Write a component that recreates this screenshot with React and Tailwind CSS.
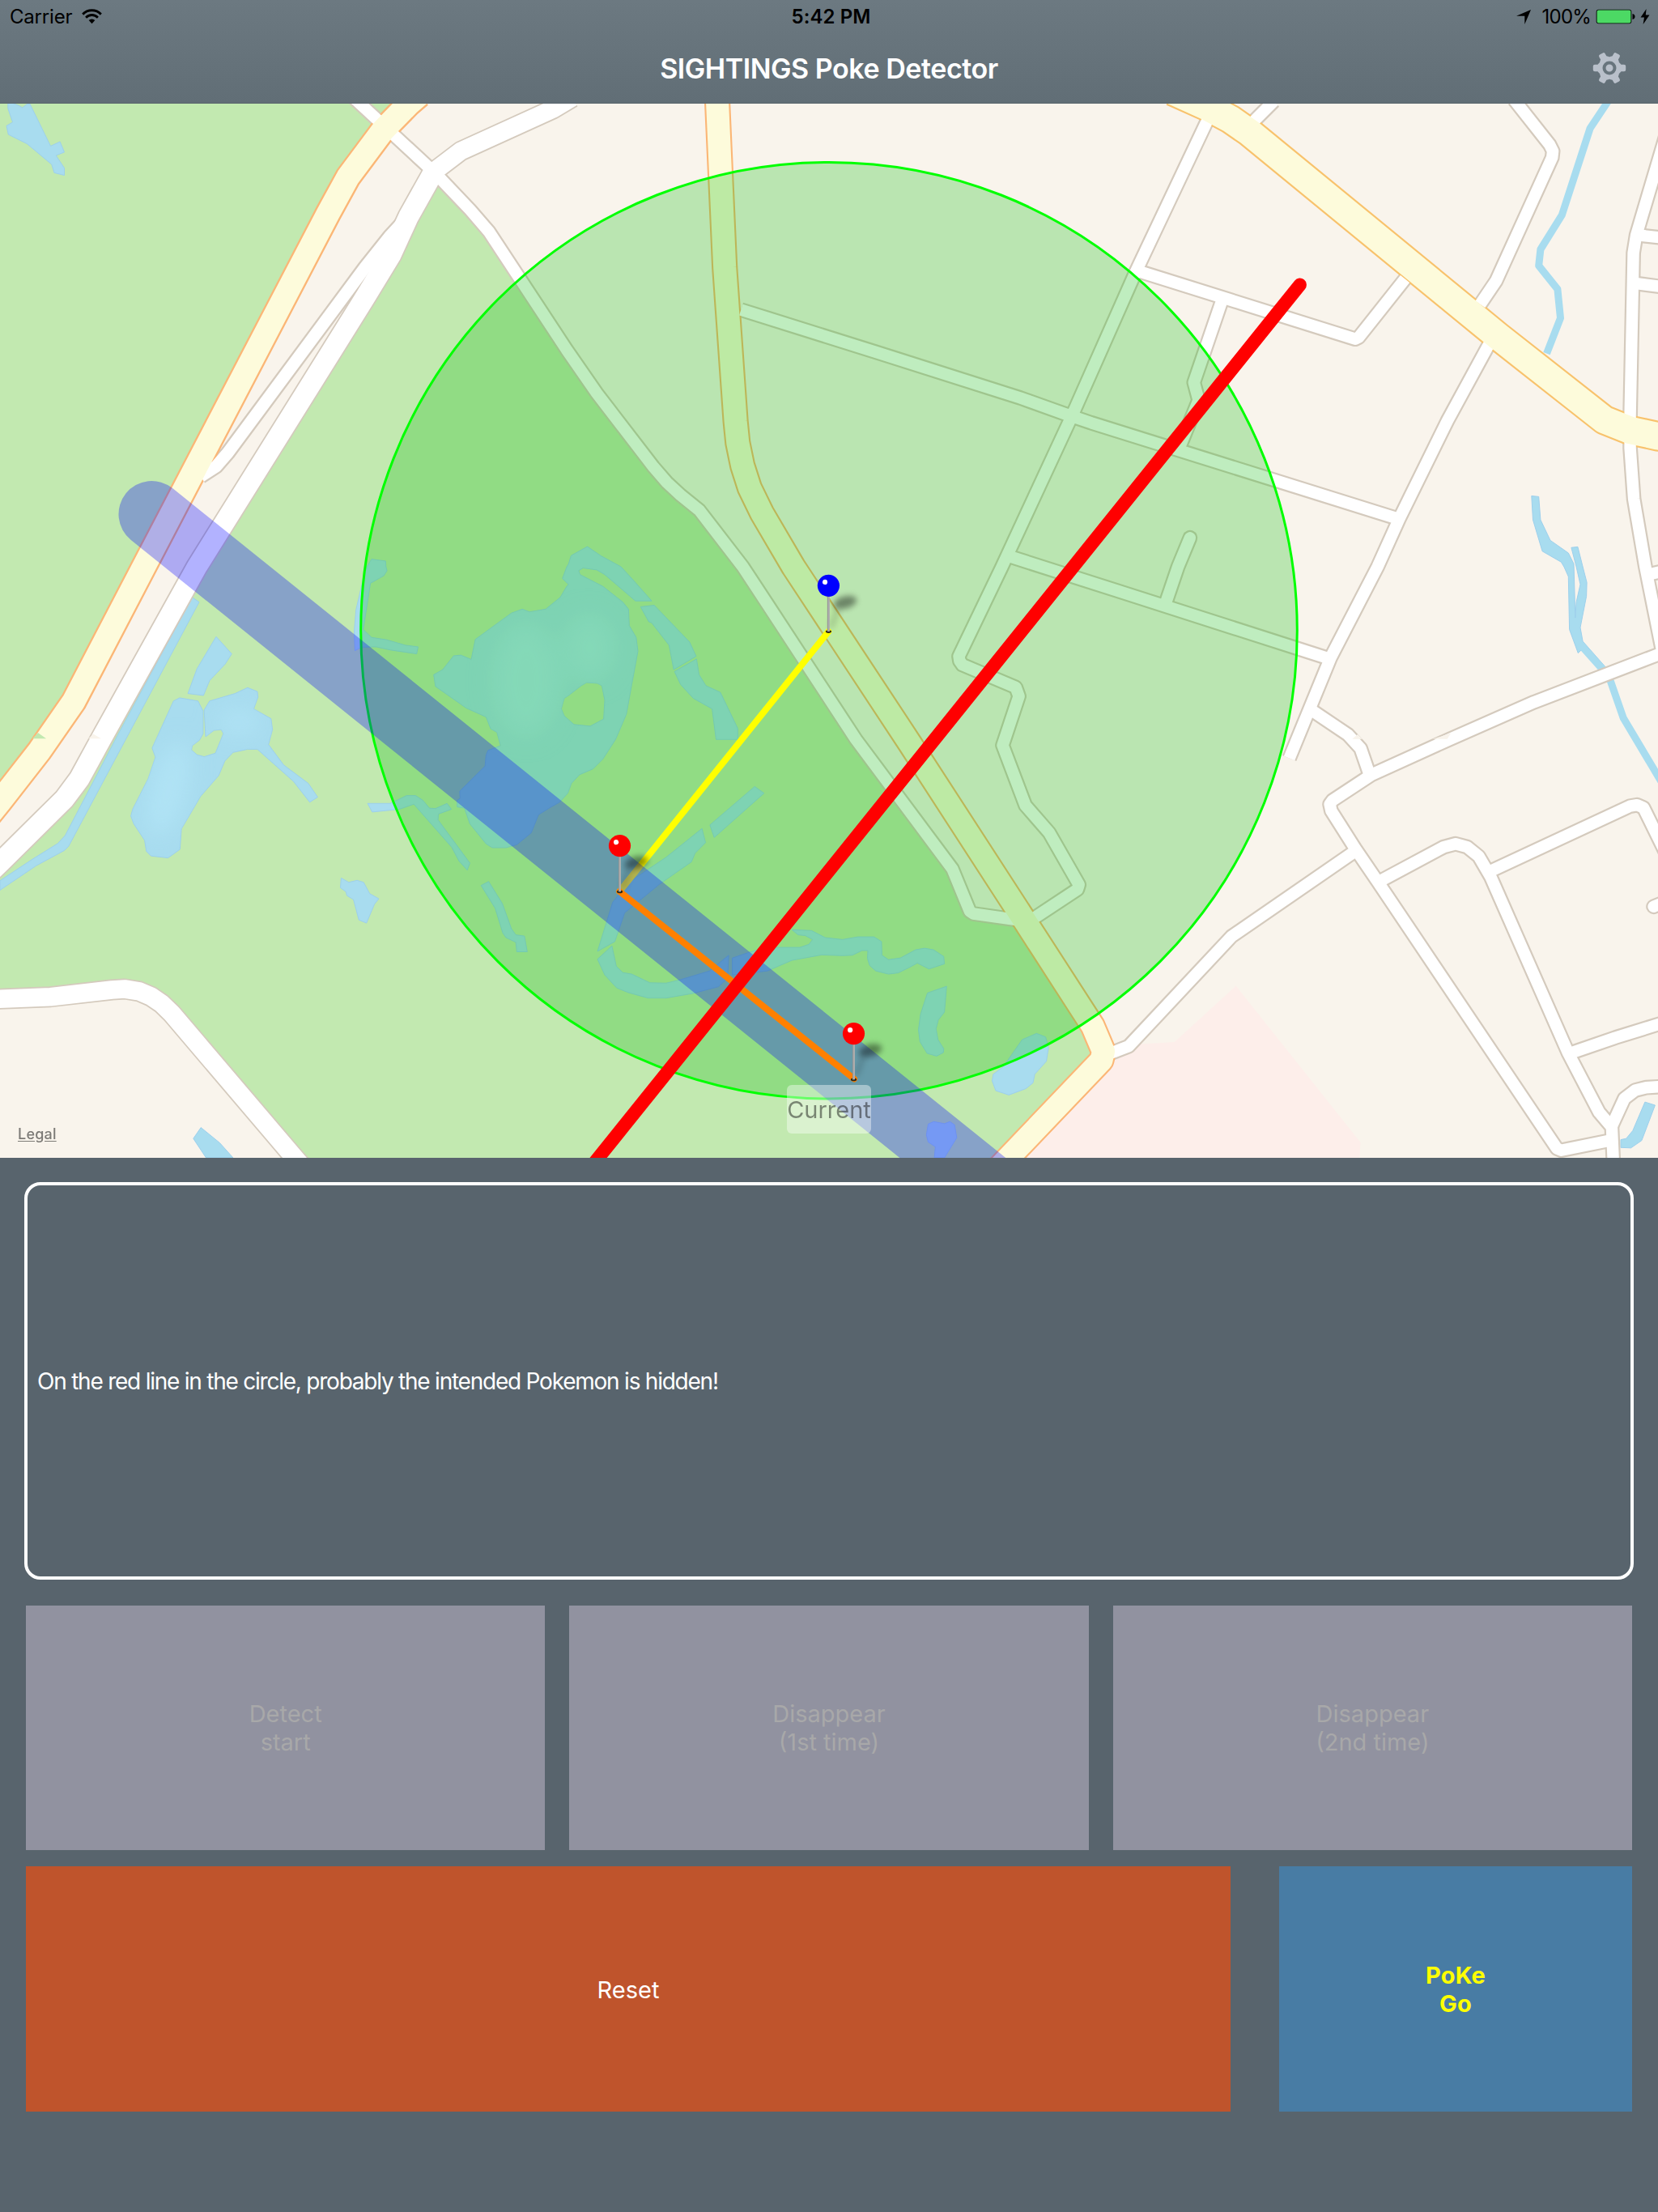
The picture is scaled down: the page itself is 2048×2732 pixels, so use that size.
import React from "react";

// Map geometry is stored per survey sheet: a letter selects the sheet that the
// coordinates after it belong to.
const SHEETS = {
  A: [0, 0, 2.24, 2.24],
  B: [680, 0, 2.24, 2.24],
  C: [1348, 0, 2.24, 2.24],
  D: [0, 700, 2.24, 2.0632],
  E: [680, 700, 2.24, 2.0632],
  F: [1348, 700, 2.24, 2.0632],
};

function trace(src, close) {
  let sheet = SHEETS.A;
  const pts = [];
  for (const token of src.trim().split(/\s+/)) {
    if (SHEETS[token]) {
      sheet = SHEETS[token];
      continue;
    }
    const [x, y] = token.split(",").map(Number);
    pts.push(`${(sheet[0] + x / sheet[2]).toFixed(1)} ${(sheet[1] + y / sheet[3]).toFixed(1)}`);
  }
  return "M" + pts.join("L") + (close ? "Z" : "");
}

const PARKS = [
  "A -20,200 1200,200 1130,288 1060,360 963,490 908,590 398,1568 D 204,343 110,468 0,598 -60,660",
  "A 1205,480 1300,580 1353,641 1568,968 B 128,1088 285,1292 322,1335 360,1370 412,1412 532,1568 E 595,88 845,440 1112,770 1165,880 1180,884 1300,900 1500,1170 1530,1248 1240,1530 D 838,1530 475,1138 447,1113 418,1095 385,1082 345,1076 310,1078 140,1096 -20,1102 -40,790 0,754 178,592 220,540 284,432 550,0 A 1012,810 1080,710 1130,600",
];

const PINK = "F 400,1068 745,1467 740,1530 -260,1530 30,1250 120,1225 135,1216 230,1211";

const LAKES = [
  "A 22,280 22,300 35,338 18,348 23,372 75,398 143,455 150,478 178,485 178,465 155,430 178,421 166,392 140,404 83,288 75,288 62,298 52,292",
  "D 598,178 641,222 623,248 580,290 563,328 520,323 545,260",
  "D 497,334 548,342 562,368 562,425 552,442 532,456 530,467 545,479 565,484 596,475 618,425 612,415 592,417 569,433 565,365 580,342 650,323 685,308 712,318 714,332 702,362 750,387 754,415 743,453 785,505 853,552 879,587 857,600 812,547 712,465 685,465 645,473 622,495 605,532 555,585 502,668 498,720 465,742 418,737 405,725 400,697 370,655 362,635 367,618 410,540 430,485 421,462 480,342",
  "D 944,793 965,804 988,799 1006,804 1023,833 1048,846 1036,860 1014,908 993,900 978,848 960,838 957,828 942,818",
  "D 532,78 551,90 190,712 178,723 100,762 0,824 0,800 90,745 160,705 180,685 325,430",
  "A 1028,1547 1067,1552 1068,1568 D 1071,10 1062,23 1025,42 1005,160 1028,180 1070,186 1122,200 1157,204 1153,222 1080,212 1040,204 1000,205 982,214 980,165 985,110 1005,30 1015,0",
  "D 1017,603 1080,603 1125,583 1150,583 1170,595 1188,615 1205,616 1237,603 1249,618 1213,630 1212,645 1300,755 1293,773 1270,750 1250,715 1145,605 1105,618 1030,625",
  "D 1331,812 1352,802 1390,858 1415,922 1427,938 1451,941 1459,981 1430,981 1427,957 1400,945 1391,933 1370,870",
  "E 249,102 287,98 385,192 403,228 341,262 328,200 280,143 272,140",
  "E 343,267 404,235 411,275 430,303 470,320 518,412 518,440 458,440 447,362 395,335 360,300",
  "E 565,560 591,577 453,690 441,658",
  "E 419,667 429,703 400,730 390,752 300,810 205,882 178,955 130,980 172,855 215,805 320,740",
  "E 170,966 182,1018 200,1034 225,1038 275,1060 320,1061 360,1052 440,1030 493,990 490,1048 465,1070 395,1087 320,1099 270,1099 215,1085 183,1073 150,1040 130,1000",
  "E 503,997 550,982 600,970 690,970 715,962 725,950 705,940 685,938 668,925 722,927 760,945 808,950 850,943 895,943 916,955 917,990 935,1001 968,997 1010,976 1035,972 1060,976 1088,993 1090,1012 1047,1025 1015,1010 995,1020 962,1035 935,1038 900,1030 883,1016 877,998 878,978 862,978 835,990 808,991 750,989 668,1003 600,1030 503,1040",
  "E 1096,1069 1090,1135 1073,1155 1067,1177 1072,1205 1088,1228 1087,1238 1068,1247 1042,1240 1022,1210 1018,1180 1024,1140 1043,1086",
  "E 1345,1189 1370,1198 1378,1225 1372,1260 1340,1293 1335,1315 1315,1330 1268,1346 1232,1335 1222,1310 1225,1293 1252,1275 1305,1205",
  "E 1045,1420 1060,1414 1090,1419 1105,1414 1118,1422 1124,1455 1090,1506 1062,1506 1065,1478 1045,1466 1040,1448",
  "D 556,1429 608,1468 645,1506 570,1506 535,1457",
  "C 1218,1372 1238,1374 1243,1438 1270,1495 1320,1530 1335,1560 F 1339,130 1342,90 1353,45 1342,0 C 1328,1515 1346,1513 1360,1568 F 1371,40 1370,75 1353,155 1360,190 1425,258 1405,260 1358,210 1347,220 1323,160 1320,25 1308,0 C 1300,1555 1248,1525 1222,1438",
  "F 1532,1364 1560,1372 1523,1462 1493,1481 1465,1480 1465,1460 1480,1457 1498,1437",
];

const BIG_LAKE =
  trace("D 1200,275 1225,262 1255,227 1275,225 1304,236 1315,185 1415,118 1445,108 1465,115 1510,108 1550,78 1568,50 1573,45 E 33,30 45,0 B 50,1560 57,1537 102,1512 140,1538 195,1568 E 230,35 280,87 235,87 150,20 128,8 90,3 78,10 82,20 145,50 200,90 216,108 218,150 237,180 242,215 225,300 210,375 180,440 145,490 118,515 80,530 58,552 48,577 25,600 0,613 D 1490,632 1470,678 1430,708 1400,716 1362,716 1345,706 1300,655 1285,615 1265,612 1265,595 1273,590 1272,572 1342,508 1345,480 1350,468 1385,456 1375,422 1358,413 1345,383 1290,360 1205,305", true) +
  trace("E 35,345 38,335 50,328 85,303 100,295 130,297 142,303 150,340 147,388 110,406 65,402 38,380 30,362", true);

const STREAMS = [
  "C 1430,280 1380,355 1302,595 1243,690 1238,735 1290,800 1298,880 1260,978",
  "F 1350,195 1415,262 1436,290 1472,385 1585,560",
];

// [path, outer width, inner width]
const WHITE_ROADS = [
  ["A 1200,475 1130,600 1082,705 1012,820 545,1568 D 284,432 220,540 178,592 0,754 -40,790", 28.5, 25],
  ["A 1200,475 1275,418 1530,302 B 60,270", 25.5, 22],
  ["D -20,1102 140,1096 310,1078 345,1076 385,1082 418,1095 447,1113 475,1138 815,1506 850,1543", 26, 22.6],
  ["A 1110,620 1078,655 1010,740 630,1253 598,1290 555,1318", 19.5, 15],
  ["A 980,272 1205,480 1300,580 1353,641 1568,968 B 128,1088 285,1292 322,1335 360,1370 412,1412 532,1568 E 595,88 845,440 1112,770 1160,878 1170,884 1290,900", 18.8, 14.4],
  ["E 1330,900 1458,822 1462,810 1380,678 1314,608 1251,455 1296,330 1287,307 1140,250 1132,240 1130,228 1249,0 B 1443,1150 1618,755 C 325,325", 18.8, 14.4],
  ["B 527,857 900,974 1300,1101 1426,1146 C 0,1170 845,1434", 18.8, 14.4],
  ["C 130,750 730,938 740,933 868,772", 18.8, 14.4],
  ["C 362,830 284,1058 297,1107 243,1240", 18.8, 14.4],
  ["B 1275,1541 F 72,61 648,231", 18.8, 14.4],
  ["C 273,1488 240,1568 F 205,95", 18.8, 14.4, "round"],
  ["C 1170,276 1268,400 1277,418 1275,436 1120,777 1076,842", 18.8, 14.4],
  ["C 1110,935 985,1165 852,1435 792,1568 F 662,232 548,488", 18.8, 14.4],
  ["C 505,280 440,345", 18.8, 14.4],
  ["C 1600,340 1508,650 1500,700 1491,1150 1491,1240 1501,1380 1533,1568 F 1582,225", 18.8, 14.4],
  ["C 1508,650 1590,659", 18.8, 14.4],
  ["C 1500,783 1590,795", 18.8, 14.4],
  ["F 1540,20 1590,10", 18.8, 14.4],
  ["F 1590,216 1225,345 990,440 775,530 668,595 660,605 664,622 730,718 793,803 1288,1482 1300,1487 1440,1461", 18.8, 14.4],
  ["F 612,367 710,428 745,463 770,530", 18.8, 14.4],
  ["F 722,730 388,942 103,1222 30,1248", 18.8, 14.4],
  ["F 795,803 975,714 1008,706 1040,714 1072,738 1105,790 1320,1240 1405,1390 1440,1428 1445,1530", 18.8, 14.4],
  ["F 1110,773 1490,610 1510,607 1528,614 1590,730", 18.8, 14.4],
  ["F 1330,1238 1450,1200 1590,1160", 18.8, 14.4],
  ["F 1440,1425 1475,1355 1505,1334 1535,1327 1590,1324", 18.8, 14.4],
  ["F 1556,866 1600,850", 18.8, 14.4, "round"],
];

const YELLOW_ROADS = [
  ["A 1160,262 1130,288 1060,360 963,490 908,590 398,1568 D 204,343 110,468 0,598 -60,666", 33.4, 28.8, "#fbb676"],
  ["B 461,270 482,740 512,1165 518,1225 531,1288 551,1350 585,1420 672,1568 E 994,450 1305,892 1500,1170 1530,1235 1524,1258 1240,1532", 32.2, 28, "#fbb676"],
  ["C 225,252 320,295 385,330 437,366 1125,930 1420,1162 1490,1190 1568,1207 1620,1215", 37.6, 33.4, "#f8c26c"],
];

function Pin({ x, y, color }) {
  return (
    <g transform={`translate(${x} ${y})`}>
      <path d="M3 -4L12 -28" stroke="#000" strokeOpacity="0.14" strokeWidth="7" filter="url(#soft)" />
      <ellipse cx="20.5" cy="-35.5" rx="14.5" ry="7.5" fill="#000" fillOpacity="0.42" filter="url(#soft)" transform="rotate(-15 20.5 -35.5)" />
      <ellipse cx="0" cy="0.6" rx="3.6" ry="1.8" fill="#2b2618" />
      <path d="M0 -44V0.5" stroke="#adadad" strokeWidth="3" />
      <path d="M-1 -44V0.5" stroke="#969696" strokeWidth="1" />
      <circle cx="0" cy="-56.2" r="13.6" fill={color} />
      <circle cx="-4.4" cy="-60.6" r="3.1" fill="#fff" />
    </g>
  );
}

function MapCanvas() {
  return (
    <svg className="block h-full w-full" viewBox="0 128 2048 1302" fill="none" strokeLinejoin="round">
      <defs>
        <filter id="soft" x="-80%" y="-80%" width="260%" height="260%">
          <feGaussianBlur stdDeviation="3.8" />
        </filter>
        <filter id="glow" x="-60%" y="-60%" width="220%" height="220%">
          <feGaussianBlur stdDeviation="14" />
        </filter>
        <clipPath id="lakes">
          <path d={trace(LAKES[2], true)} />
          <path d={BIG_LAKE} clipRule="evenodd" />
        </clipPath>
      </defs>
      <rect y="128" width="2048" height="1302" fill="#f9f4ec" />
      {PARKS.map((p) => <path key={p} d={trace(p, true)} fill="#c2e9b0" />)}
      <path d={trace(PINK, true)} fill="#fdeeea" />
      <g fill="#a8dcef" stroke="#9dd0ec" strokeWidth="1">
        {LAKES.map((p) => <path key={p} d={trace(p, true)} />)}
        <path d={BIG_LAKE} fillRule="evenodd" />
      </g>
      <g clipPath="url(#lakes)">
        <g fill="#b0e3f5" filter="url(#glow)">
          <ellipse cx="208" cy="975" rx="22" ry="60" transform="rotate(15 208 975)" />
          <ellipse cx="295" cy="892" rx="28" ry="14" />
          <ellipse cx="650" cy="840" rx="42" ry="70" />
          <ellipse cx="728" cy="800" rx="32" ry="42" />
        </g>
      </g>
      {STREAMS.map((p) => <path key={p} d={trace(p)} stroke="#a8dcef" strokeWidth="9" />)}
      {WHITE_ROADS.map(([p, w, , cap]) => (
        <path key={p} d={trace(p)} stroke="#d4cabd" strokeWidth={w} strokeLinecap={cap || "butt"} />
      ))}
      {YELLOW_ROADS.map(([p, w, , c]) => <path key={p} d={trace(p)} stroke={c} strokeWidth={w} />)}
      {WHITE_ROADS.map(([p, , w, cap]) => (
        <path key={p} d={trace(p)} stroke="#fff" strokeWidth={w} strokeLinecap={cap || "butt"} />
      ))}
      {YELLOW_ROADS.map(([p, , w]) => <path key={p} d={trace(p)} stroke="#fdfbdb" strokeWidth={w} />)}
      <path d={trace("D 90,438 105,423 128,438", true)} fill="#c2e9b0" />
      <path d={trace("D 245,438 258,426 280,438", true)} fill="#f9f4ec" />
      <path d={trace("F 945,439 995,424 985,439", true)} fill="#f9f4ec" />
      <path d={trace("F 722,439 737,427 750,439", true)} fill="#f9f4ec" />

      <circle cx="1024" cy="778.7" r="578.3" fill="#00b800" fillOpacity="0.25" />
      <circle cx="1024" cy="778.7" r="578.3" stroke="#00ff00" strokeWidth="3" />
      <path d="M1023.3 780L765.3 1101" stroke="#ffff00" strokeWidth="8" strokeLinecap="round" />
      <path d="M187.5 635L1300 1529" stroke="#0000ff" strokeOpacity="0.3" strokeWidth="82" strokeLinecap="round" />
      <path d="M765.3 1101L1055 1332.5" stroke="#ff8000" strokeWidth="8" strokeLinecap="round" />
      <path d="M1605.6 351.8L723 1450" stroke="#ff0000" strokeWidth="16.5" strokeLinecap="round" />
      <Pin x={1023.4} y={779.5} color="#0000ff" />
      <Pin x={765.5} y={1100.8} color="#ff0000" />
      <Pin x={1054.5} y={1332.8} color="#ff0000" />
    </svg>
  );
}

function WifiIcon() {
  return (
    <svg className="h-[19px] w-[25px]" viewBox="0 0 26 19" preserveAspectRatio="none" fill="none" stroke="#000">
      <path d="M1.2 6.6A16.8 16.8 0 0 1 24.8 6.6" strokeWidth="2.9" />
      <path d="M5.3 10.7A11 11 0 0 1 20.7 10.7" strokeWidth="2.9" />
      <path d="M13 18.2L9 14.1A5.6 5.6 0 0 1 17 14.1Z" fill="#000" stroke="none" />
    </svg>
  );
}

function GearIcon() {
  return (
    <svg className="h-[42px] w-[42px]" viewBox="-21 -21 42 42" fill="#b9c0ca">
      {[0, 60, 120, 180, 240, 300].map((a) => (
        <path key={a} d="M7 -8.5L12.5 -6.5L14.5 -4.2H18Q20.2 -4.2 20.2 -2.2V2.2Q20.2 4.2 18 4.2H14.5L12.5 6.5L7 8.5Z" transform={`rotate(${a})`} />
      ))}
      <circle r="13" />
      <circle r="6.5" fill="none" stroke="#68757d" strokeWidth="4" />
    </svg>
  );
}

function StatusBar() {
  return (
    <div className="grid h-10 grid-cols-3 items-center pt-[1px] text-[24px] leading-none text-black">
      <div className="flex items-center gap-3 pl-[12px]">
        <span className="tracking-[-0.2px]">Carrier</span>
        <WifiIcon />
      </div>
      <div className="pl-[5px] text-center font-semibold tracking-[0.1px]">5:42 PM</div>
      <div className="flex items-center justify-end pr-[10px]">
        <svg className="mr-[14px] h-[18px] w-[18px]" viewBox="0 0 18 18">
          <path d="M18 0L10.3 18V7.8H0Z" fill="#000" />
        </svg>
        <span className="mr-[6px] tracking-[-0.8px]">100%</span>
        <svg className="mr-[6px] h-[19px] w-[49px]" viewBox="0 0 49 19" fill="none">
          <rect x="0.7" y="0.7" width="43.6" height="17.6" rx="3" fill="#000" />
          <rect x="1.6" y="1.6" width="41.8" height="15.8" rx="2" fill="#4cd964" />
          <path d="M45.5 6Q48.5 6.6 48.5 9.5T45.5 13Z" fill="#000" />
        </svg>
        <svg className="h-[19px] w-[12px]" viewBox="0 0 12 19">
          <path d="M7.6 0L0.5 10.6H5L3.6 19L11.5 7.6H6.8Z" fill="#000" />
        </svg>
      </div>
    </div>
  );
}

function DetectButton({ first, second }) {
  return (
    <button className="flex h-[302px] flex-1 flex-col items-center justify-center bg-[#9192a0] text-[29px] leading-[35px] text-[#a8a8a9]">
      <span>{first}</span>
      <span>{second}</span>
    </button>
  );
}

export default function App() {
  return (
    <div className="flex h-[2732px] w-[2048px] flex-col overflow-hidden bg-[#58646d] font-['Inter',sans-serif]">
      <header className="h-[128px] border-b border-[#59656c] bg-linear-to-b from-[#6c7981] to-[#616e76]">
        <StatusBar />
        <div className="grid h-[88px] grid-cols-[1fr_auto_1fr] items-center">
          <span />
          <h1 className="pt-[1px] text-[34px] leading-none font-semibold tracking-[-0.45px] text-white">SIGHTINGS Poke Detector</h1>
          <div className="flex justify-end pr-[39px]">
            <GearIcon />
          </div>
        </div>
      </header>

      <main className="relative h-[1302px]">
        <MapCanvas />
        <span className="absolute bottom-[20px] left-[22px] text-[18px] leading-none font-medium tracking-[0.2px] text-[#7c7a76] underline underline-offset-2">Legal</span>
        <span className="absolute bottom-[30px] left-[972px] flex h-[60px] w-[104px] items-center justify-center rounded-md bg-white/40 text-[29px] leading-none text-black/45">Current</span>
      </main>

      <section className="mx-[30px] mt-[30px] flex h-[491px] items-center rounded-[20px] border-4 border-white pl-[12px]">
        <p className="text-[28px] leading-none tracking-[-1.23px] text-white">On the red line in the circle, probably the intended Pokemon is hidden!</p>
      </section>

      <div className="mx-[32px] mt-[32px] flex gap-[30px]">
        <DetectButton first="Detect" second="start" />
        <DetectButton first="Disappear" second="(1st time)" />
        <DetectButton first="Disappear" second="(2nd time)" />
      </div>

      <div className="mx-[32px] mt-[20px] flex gap-[60px]">
        <button className="h-[303px] w-[1488px] bg-[#bf542c] pt-[2px] text-[29px] text-white">Reset</button>
        <button className="flex h-[303px] flex-1 flex-col items-center justify-center bg-[#487ca4] text-[29px] leading-[35px] font-bold tracking-[0.2px] text-[#ffff00]">
          <span>PoKe</span>
          <span>Go</span>
        </button>
      </div>
    </div>
  );
}
